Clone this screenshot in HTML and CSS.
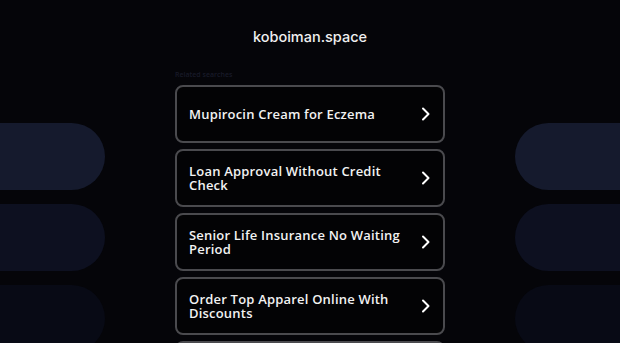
FILE: index.html
```html
<!DOCTYPE html>
<html lang="en">
<head>
  <meta charset="UTF-8" />
  <meta name="viewport" content="width=device-width, initial-scale=1.0" />
  <link rel="stylesheet" href="styles.css">
</head>
<body>
  <div class="deco deco-left">
    <div class="pill p1"></div>
    <div class="pill p2"></div>
    <div class="pill p3"></div>
  </div>
  <div class="deco deco-right">
    <div class="pill p1"></div>
    <div class="pill p2"></div>
    <div class="pill p3"></div>
  </div>

  <div class="page">
    <h1 class="domain">koboiman.space</h1>
    <div class="related">Related searches</div>
    <div class="links">
      <a class="link" href="#"><span>Mupirocin Cream for Eczema</span>
        <svg class="chev" viewBox="0 0 10 14" width="10" height="14"><path d="M2 1.5 L7.5 7 L2 12.5" /></svg></a>
      <a class="link" href="#"><span>Loan Approval Without Credit Check</span>
        <svg class="chev" viewBox="0 0 10 14" width="10" height="14"><path d="M2 1.5 L7.5 7 L2 12.5" /></svg></a>
      <a class="link" href="#"><span>Senior Life Insurance No Waiting Period</span>
        <svg class="chev" viewBox="0 0 10 14" width="10" height="14"><path d="M2 1.5 L7.5 7 L2 12.5" /></svg></a>
      <a class="link" href="#"><span>Order Top Apparel Online With Discounts</span>
        <svg class="chev" viewBox="0 0 10 14" width="10" height="14"><path d="M2 1.5 L7.5 7 L2 12.5" /></svg></a>
      <a class="link" href="#"></a>
    </div>
  </div>
</body>
</html>
```

FILE: styles.css
```css
html, body {
  height: 100%;
  overflow: hidden;
}
body {
  margin: 0;
  background-color: #050509;
  font-family: "Open Sans", "DejaVu Sans", sans-serif;
  color: #f2f2f2;
  position: relative;
}

/* background pills on both sides */
.deco {
  position: absolute;
  top: 123px;
  display: flex;
  flex-direction: column;
  gap: 14px;
}
.deco-left { left: -40px; }
.deco-right { right: -40px; }
.pill {
  width: 145px;
  height: 67px;
  border-radius: 34px;
}
.p1 { background-color: #151a2d; }
.p2 { background-color: #0d1020; }
.p3 { background-color: #080a15; }

.page {
  position: relative;
  width: 270px;
  margin: 0 auto;
  padding-top: 27px;
}
.domain {
  margin: 0;
  text-align: center;
  font-family: Inter, "Liberation Sans", sans-serif;
  font-size: 14.5px;
  font-weight: 500;
  line-height: 20px;
  color: #f0f0f0;
}
.related {
  margin-top: 22px;
  height: 12px;
  font-size: 7px;
  line-height: 12px;
  font-weight: 600;
  color: #181a28;
}
.links {
  margin-top: 4px;
  display: flex;
  flex-direction: column;
  gap: 6px;
}
.link {
  display: flex;
  align-items: center;
  justify-content: space-between;
  box-sizing: border-box;
  height: 58px;
  padding: 0 12px 0 12px;
  border: 2px solid #4a4a4e;
  border-radius: 8px;
  background-color: #030305;
  color: #f2f2f2;
  text-decoration: none;
  font-size: 13px;
  font-weight: 600;
  line-height: 14px;
  letter-spacing: 0.2px;
}
.link span {
  max-width: 222px;
}
.chev {
  flex: none;
}
.chev path {
  fill: none;
  stroke: #ffffff;
  stroke-width: 2;
  stroke-linecap: round;
  stroke-linejoin: round;
}
```
